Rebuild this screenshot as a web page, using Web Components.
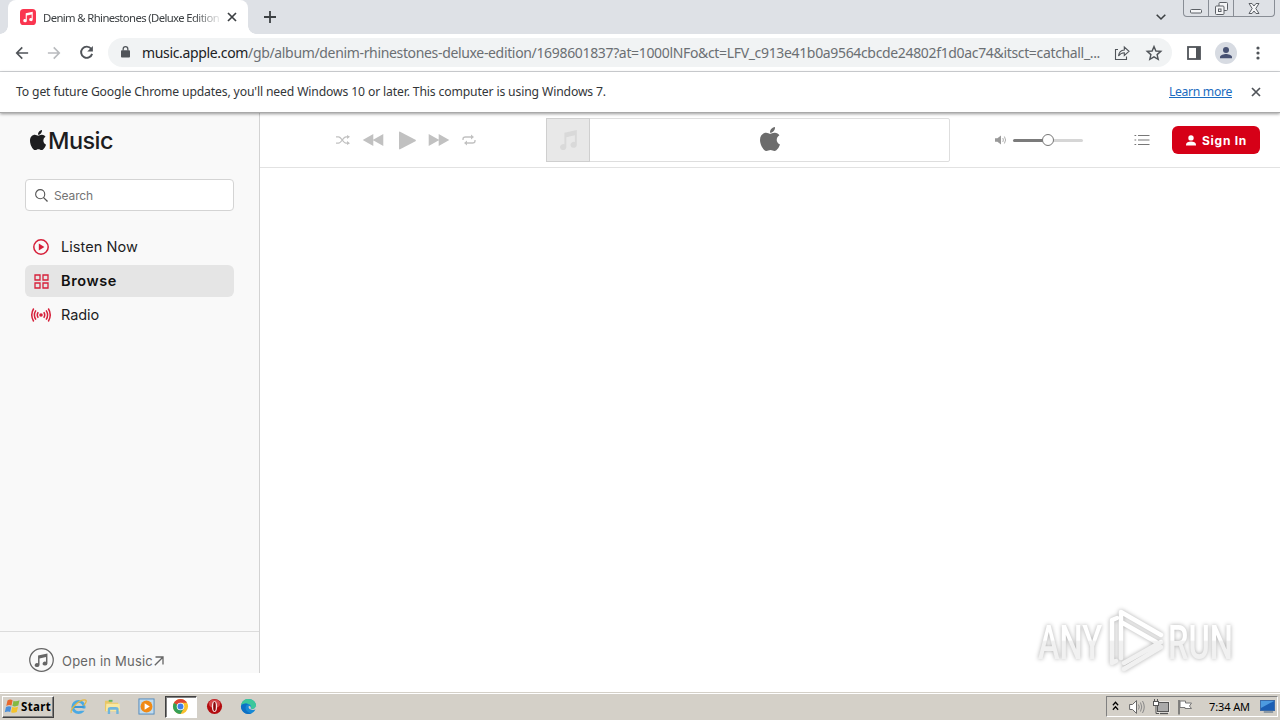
<!DOCTYPE html>
<html lang="en">
<head>
<meta charset="utf-8">
<title>Apple Music</title>
<style>
  body {
    margin: 0;
    width: 1280px;
    height: 720px;
    overflow: hidden;
    background: #fff;
    font-family: "Noto Sans", "Open Sans", sans-serif;
    display: flex;
    flex-direction: column;
  }
</style>
</head>
<body>
<tab-strip></tab-strip>
<browser-toolbar></browser-toolbar>
<info-bar></info-bar>
<music-page></music-page>
<task-bar></task-bar>
<any-watermark></any-watermark>

<script>
const APPLE = "M318.7 268.7c-.2-36.7 16.4-64.4 50-84.8-18.8-26.9-47.2-41.7-84.7-44.6-35.5-2.8-74.3 20.7-88.5 20.7-15 0-49.4-19.7-76.4-19.7C63.3 141.2 4 184.8 4 273.5q0 39.3 14.4 81.2c12.8 36.7 59 126.7 107.2 125.2 25.2-.6 43-17.9 75.8-17.9 31.8 0 48.3 17.9 76.4 17.9 48.6-.7 90.4-82.5 102.6-119.3-65.2-30.7-61.7-90-61.7-91.9zm-56.6-164.2c27.3-32.4 24.8-61.9 24-72.5-24.1 1.4-52 16.4-67.9 34.9-17.5 19.8-27.8 44.3-25.6 71.9 26.1 2 49.9-11.4 69.5-34.3z";
const NOTE = "M5.4 3.200 14.4 1.300V11.300A2.300 2 0 1 1 13 9.400V4.800L6.800 6.100V12.800A2.300 2 0 1 1 5.400 10.900Z";

// name: [viewBox, markup]
const ICONS = {
  apple: ["4 32 376 448", `<path fill="currentColor" d="${APPLE}"/>`],
  note: ["0 0 16 16", `<path fill="currentColor" d="${NOTE}"/>`],
  favicon: ["0 0 16 16", `<rect width="16" height="16" rx="3.6" fill="#fa3650"/><path fill="#fff" transform="translate(1.500 1.800) scale(.78)" d="${NOTE}"/>`],
  close: ["0 0 10 10", `<path d="M1 1 9 9M9 1 1 9" stroke="currentColor" stroke-width="1.7"/>`],
  plus: ["0 0 12 12", `<path d="M6 0V12M0 6H12" stroke="currentColor" stroke-width="1.8"/>`],
  chevron: ["0 0 10 6", `<path d="M.7.8 5 5 9.300.8" fill="none" stroke="currentColor" stroke-width="1.6"/>`],
  back: ["0 0 16 16", `<path d="M15 8H2M8.300 1.600 2 8 8.300 14.400" fill="none" stroke="currentColor" stroke-width="1.9"/>`],
  forward: ["0 0 16 16", `<path d="M1 8H14M7.700 1.600 14 8 7.700 14.400" fill="none" stroke="currentColor" stroke-width="1.9"/>`],
  reload: ["0 0 16 16", `<path d="M13 4A6 6 0 1 0 14 9.500" fill="none" stroke="currentColor" stroke-width="2"/><path fill="currentColor" d="M14.800 1V7H8.800Z"/>`],
  lock: ["0 0 10 13", `<rect y="4.600" width="10" height="7.900" rx="1" fill="currentColor"/><path d="M2.400 5V3.300A2.600 2.600 0 0 1 7.600 3.300V5" fill="none" stroke="currentColor" stroke-width="1.400"/>`],
  share: ["0 0 16 16", `<path d="M4 4.500H1.500V14.500H12.500V11.500M4.500 11C5 7 7 5.300 10.300 5V2L15 6.300 10.300 10.500V7.700C8 7.700 6 8.700 4.500 11Z" fill="none" stroke="currentColor" stroke-width="1.100"/>`],
  star: ["0 0 16 16", `<path d="M8 1.600 9.900 6 14.800 6.400 11.100 9.600 12.200 14.300 8 11.800 3.800 14.300 4.900 9.600 1.200 6.400 6.100 6Z" fill="none" stroke="currentColor" stroke-width="1.400"/>`],
  panel: ["0 0 14 14", `<rect x="1" y="1" width="12" height="12" fill="none" stroke="currentColor" stroke-width="1.800"/><path fill="currentColor" d="M9 1H13V13H9Z"/>`],
  avatar: ["0 0 22 22", `<circle cx="11" cy="11" r="11" fill="#d7dbe2"/><circle cx="11" cy="8" r="3" fill="#475172"/><path d="M5 16.200V15C5 12.900 9 12 11 12S17 12.900 17 15V16.200Z" fill="#475172"/>`],
  dots: ["0 0 4 14", `<g fill="currentColor"><circle cx="2" cy="2" r="1.600"/><circle cx="2" cy="7" r="1.600"/><circle cx="2" cy="12" r="1.600"/></g>`],
  search: ["0 0 14 14", `<circle cx="5.600" cy="5.600" r="4.900" fill="none" stroke="currentColor" stroke-width="1.200"/><path d="M9 9 13.500 13.500" stroke="currentColor" stroke-width="1.400"/>`],
  listen: ["0 0 16 16", `<circle cx="8" cy="8" r="7.200" fill="none" stroke="currentColor" stroke-width="1.500"/><path fill="currentColor" d="M5.800 4.600V11.400L11.400 8Z"/>`],
  browse: ["0 0 15 15", `<path d="M1 1H6V6H1ZM9 1H14V6H9ZM1 9H6V14H1ZM9 9H14V14H9Z" fill="none" stroke="currentColor" stroke-width="1.300"/>`],
  radio: ["0 0 20 14", `<circle cx="10" cy="7" r="1.800" fill="currentColor"/><path d="M7.200 4.200Q5.300 7 7.200 9.800M12.800 4.200Q14.700 7 12.800 9.800M4.900 2.400Q1.900 7 4.900 11.600M15.100 2.400Q18.100 7 15.100 11.600M2.700.5Q-1.200 7 2.700 13.500M17.300.5Q21.200 7 17.300 13.500" fill="none" stroke="currentColor" stroke-width="1.500"/>`],
  shuffle: ["0 0 14 10", `<path d="M0 1.800H2.500C5.500 1.800 7 8.200 10 8.200H12.500M0 8.200H2.500C5.500 8.200 7 1.800 10 1.800H12.500" fill="none" stroke="currentColor" stroke-width="1.300"/><path d="M11 0 14 1.800 11 3.900ZM11 6.100 14 8.200 11 10Z" fill="currentColor"/>`],
  prev: ["0 0 22 12", `<path d="M11.300 0V12L.7 6ZM21.300 0V12L10.700 6Z" fill="currentColor"/>`],
  play: ["0 0 16 20", `<path d="M0 1.500Q0 .3 1 .8L15.500 9.300Q16.500 10 15.500 10.700L1 19.200Q0 19.700 0 18.500Z" fill="currentColor"/>`],
  next: ["0 0 22 12", `<path d="M.7 0V12L11.300 6ZM10.700 0V12L21.300 6Z" fill="currentColor"/>`],
  repeat: ["0 0 14 12", `<path d="M1 6V5Q1 3 3.500 3H10M13 6V7Q13 9 10.500 9H4" fill="none" stroke="currentColor" stroke-width="1.300"/><path d="M9 .6 12 3 9 5.400ZM5 6.600 2 9 5 11.400Z" fill="currentColor"/>`],
  volume: ["0 0 12 10", `<path d="M0 3.200H2.400L6 .5V9.500L2.400 6.800H0Z" fill="currentColor"/><path d="M7.800 3Q9 5 7.800 7M9.400 1.500Q11.800 5 9.400 8.500" fill="none" stroke="currentColor" stroke-width=".8"/>`],
  list: ["0 0 16 12", `<path d="M4 1.500H15.500M4 6H15.500M4 10.500H15.500M.5 1.500H2.200M.5 6H2.200M.5 10.500H2.200" stroke="currentColor" stroke-width="1.200"/>`],
  person: ["0 0 10 11", `<circle cx="5" cy="2.900" r="2.700" fill="currentColor"/><path d="M0 10.600V9.400C0 7.500 2.500 6.500 5 6.500S10 7.500 10 9.400V10.600Z" fill="currentColor"/>`],
  openmusic: ["0 0 24 24", `<circle cx="12" cy="12" r="11.300" fill="none" stroke="currentColor" stroke-width="1.200"/><path fill="currentColor" transform="translate(3.300 4.300)" d="${NOTE}"/>`],
  arrow: ["0 0 10 10", `<path d="M.8 9.200 8.800 1.200M1.500 1H9V8.500" fill="none" stroke="currentColor" stroke-width="1.300"/>`],
  windows: ["0 0 17 17", `<path d="M3.500 2.500Q6 .8 8.600 2.300L7.500 7.600Q5 6.300 2.300 8Z" fill="#e8682c"/><path d="M9.500 2.700Q12 4 15.500 2.200L14.300 7.600Q11 9 8.400 7.900Z" fill="#83b943"/><path d="M2 9Q5 7.500 7.300 8.700L6.200 14Q4 12.800 .8 14.300Z" fill="#4a8fda"/><path d="M8.200 9Q11 10 14 8.700L12.800 14Q10 15.500 7.100 14.300Z" fill="#f4c32c"/>`],
  ie: ["0 0 18 18", `<circle cx="9" cy="9.500" r="6" fill="none" stroke="#4aa9e3" stroke-width="3"/><path d="M4 9.500H14.500" stroke="#3c98d7" stroke-width="2.200"/><path d="M12 11.200H17V13.500H11Z" fill="#d4d0c8"/><path d="M1.300 16C-.5 12 10 1 16.500 2.200 18.500 3 15.500 7 14.500 8" fill="none" stroke="#e5b740" stroke-width="1.300"/>`],
  folder: ["0 0 18 18", `<path d="M1 3H7L8.500 5H15V14H1Z" fill="#e8c765"/><path d="M2.500 6H16.500L17 14H2Z" fill="#f8e7a0"/><path d="M5 2H9V4H5Z" fill="#65b85f"/><path d="M4 17V12Q4 9.500 7 9.500H12.500Q15.500 9.500 15.500 12V17H13V12.500H6.500V17Z" fill="#6fb5dc"/>`],
  media: ["0 0 18 18", `<rect x="1" y="1" width="16" height="16" fill="#c0dcef" stroke="#528abb"/><circle cx="9" cy="9" r="6.300" fill="#f08a16"/><path fill="#fff" d="M7 5.500V12.500L12.500 9Z"/>`],
  chrome: ["0 0 18 18", `<circle cx="9" cy="9" r="8" fill="#fbc02d"/><path d="M9 9 2.100 5A8 8 0 0 1 15.900 5H9Z" fill="#df4435"/><path d="M2.100 5A8 8 0 0 0 9 17L12.500 11 9 9Z" fill="#36a057"/><path d="M2.100 5H9V9Z" fill="#df4435"/><circle cx="9" cy="9" r="4" fill="#fff"/><circle cx="9" cy="9" r="3.100" fill="#3f7fe8"/>`],
  opera: ["0 0 18 18", `<ellipse cx="9" cy="9" rx="8" ry="8" fill="#b30d10"/><ellipse cx="9" cy="6" rx="6" ry="4.500" fill="#d6474a"/><ellipse cx="9" cy="9" rx="2.800" ry="5.900" fill="#f7e9e9"/><ellipse cx="9" cy="9" rx="1.400" ry="4.900" fill="#8d090c"/>`],
  edge: ["0 0 18 18", `<circle cx="9" cy="9" r="8" fill="#1689d5"/><path d="M1.100 8C2 3 5 1 9 1 14 1 17 4.500 17 8 17 11 14.500 12 11.300 11.500 12.500 10 12 6.500 8 6 5 5.600 2 6.500 1.100 8Z" fill="#3cc79b"/><path d="M1 9C2 6 6 5 9 6.500 6.500 7 5.500 9 6 11.500 6.600 14 9 16 12 16.400A8 8 0 0 1 1 9Z" fill="#0d6fc4"/><path d="M9.500 8.500C8.500 9.500 9 13.500 16 12.500L17.500 11.500 17 8.500C16 11.500 13 12 11.300 11.500 12 10 11 8 9.500 8.500Z" fill="#d4d0c8"/>`],
  trayup: ["0 0 8 10", `<path d="M1 4.300 4 1.300 7 4.300M1 8.800 4 5.800 7 8.800" fill="none" stroke="currentColor" stroke-width="1.500"/>`],
  speaker: ["0 0 16 16", `<path d="M.6 5.500H3.500L7.500 1.600V14.400L3.500 10.500H.6Z" fill="#fff" stroke="#666"/><path d="M9.500 5.500Q11 8 9.500 10.500M11.500 3.500Q14 8 11.500 12.500M13.500 2Q17 8 13.500 14" fill="none" stroke="#888"/>`],
  network: ["0 0 16 16", `<rect x="4.500" y="3.500" width="11" height="9" fill="#aaa" stroke="#fff" stroke-width="2"/><rect x="4.500" y="3.500" width="11" height="9" fill="#aaa" stroke="#555"/><path d="M7 14.500H15" stroke="#555" stroke-width="1.300"/><path d="M1.500 0V3M4.500 0V3M3 6V14.500H6" fill="none" stroke="#555"/><rect x=".5" y="2.500" width="5" height="4" fill="#fff" stroke="#555"/>`],
  flag: ["0 0 16 16", `<path d="M2 1V15.500" stroke="#666" stroke-width="1.500"/><path d="M3 2H8.500V4H14.500L12.500 7 14.500 9.500H8V8.500H3Z" fill="#fff" stroke="#777"/>`],
  desktop: ["0 0 16 13", `<rect x=".5" y=".5" width="15" height="10" fill="#1c5fb4" stroke="#3a6aa8"/><path d="M1 1H15L1 8Z" fill="#4d9be0"/><path d="M4 12H14" stroke="#789" stroke-width="1.500"/>`]
};

class UiIcon extends HTMLElement {
  connectedCallback() {
    if (!this.shadowRoot) this.attachShadow({ mode: "open" });
    const [box, markup] = ICONS[this.getAttribute("name")];
    const w = this.getAttribute("w") || 16;
    const h = this.getAttribute("h") || w;
    this.shadowRoot.innerHTML = `
      <style>
        :host { display: block; flex: none; width: ${w}px; height: ${h}px; }
        svg { display: block; width: 100%; height: 100%; overflow: visible; }
      </style>
      <svg viewBox="${box}" preserveAspectRatio="none">${markup}</svg>
    `;
  }
}

// Single line label that is tracked to an exact width
class FitText extends HTMLElement {
  connectedCallback() {
    if (!this.shadowRoot) this.attachShadow({ mode: "open" });
    this.shadowRoot.innerHTML = `
      <style>
        :host { display: block; flex: none; white-space: nowrap; width: ${this.getAttribute("w")}px; }
        span { display: inline-block; }
        :host(.link) span { text-decoration: underline; }
      </style>
      <span><slot></slot></span>
    `;
    const span = this.shadowRoot.querySelector("span");
    const width = span.getBoundingClientRect().width;
    const diff = Number(this.getAttribute("w")) - width;
    span.style.letterSpacing = diff / this.textContent.length + "px";
  }
}

class TabStrip extends HTMLElement {
  connectedCallback() {
    this.attachShadow({ mode: "open" });
    this.shadowRoot.innerHTML = `
      <style>
        :host { display: flex; height: 34px; background: #dee1e6; color: #3c4043; padding: 0 5px 0 8px; box-sizing: border-box; }
        .tab {
          position: relative; display: flex; align-items: center; box-sizing: border-box;
          width: 240px; padding: 0 11px 0 12px; background: #fff; border-radius: 8px 8px 0 0;
        }
        .tab::before, .tab::after { content: ""; position: absolute; bottom: 0; width: 8px; height: 8px; }
        .tab::before { left: -8px; background: radial-gradient(circle at 0 0, transparent 7.5px, #fff 8px); }
        .tab::after { right: -8px; background: radial-gradient(circle at 100% 0, transparent 7.5px, #fff 8px); }
        .title {
          width: 177px; margin: 1px 7px 0 7px; font-size: 11.3px; line-height: 18px;
          -webkit-mask-image: linear-gradient(to right, #000 150px, transparent 180px);
        }
        .add { align-self: center; margin-left: 16px; }
        .down { margin: 14px 17px 0 auto; }
        .window { display: flex; width: 90px; height: 16px; border: 1px solid #888d95; border-top: 0; border-radius: 0 0 4px 4px; }
        .window div { width: 24px; border-right: 1px solid #888d95; display: flex; justify-content: center; align-items: center; }
        .window div:last-child { flex: 1; border: 0; }
        svg { display: block; fill: #f4f5f7; stroke: #5c6066; }
      </style>
      <div class="tab">
        <ui-icon name="favicon"></ui-icon>
        <div class="title"><fit-text w="176">Denim &amp; Rhinestones (Deluxe Edition</fit-text></div>
        <ui-icon name="close" w="10"></ui-icon>
      </div>
      <ui-icon class="add" name="plus" w="12"></ui-icon>
      <ui-icon class="down" name="chevron" w="10" h="6"></ui-icon>
      <div class="window">
        <div><svg width="12" height="12"><rect x=".5" y="7.500" width="11" height="3.500" rx="1"/></svg></div>
        <div><svg width="13" height="13"><rect x="4" y=".5" width="8.500" height="8" rx="1"/><rect x=".5" y="4" width="8.500" height="8.500" rx="1"/><rect x="3.500" y="7" width="2.500" height="2.500"/></svg></div>
        <div><svg width="12" height="11"><path d="M1 .5H4L6 3 8 .5H11L7.800 5.500 11 10.500H8L6 8 4 10.500H1L4.200 5.500Z"/></svg></div>
      </div>
    `;
  }
}

class BrowserToolbar extends HTMLElement {
  connectedCallback() {
    this.attachShadow({ mode: "open" });
    this.shadowRoot.innerHTML = `
      <style>
        :host { display: flex; align-items: center; height: 38px; box-sizing: border-box; padding: 0 6px; border-bottom: 1px solid #d5d7da; color: #505459; }
        .cell { display: flex; justify-content: center; align-items: center; width: 32px; flex: none; }
        .off { color: #b9bbbe; }
        .omnibox {
          display: flex; align-items: center; box-sizing: border-box; width: 1064px; height: 29px;
          margin: 0 6px; padding: 0 2px 0 13px; border-radius: 15px; background: #f1f3f4;
        }
        .omnibox > ui-icon { margin-top: -1px; }
        fit-text { font-size: 14px; line-height: 22px; margin: 1px 6px 0 12px; color: #6b6f73; }
        b { font-weight: 400; color: #202124; }
      </style>
      <div class="cell"><ui-icon name="back" w="14"></ui-icon></div>
      <div class="cell off"><ui-icon name="forward" w="14"></ui-icon></div>
      <div class="cell"><ui-icon name="reload" w="15"></ui-icon></div>
      <div class="omnibox">
        <ui-icon name="lock" w="9" h="12"></ui-icon>
        <fit-text w="958"><b>music.apple.com</b>/gb/album/denim-rhinestones-deluxe-edition/1698601837?at=1000lNFo&amp;ct=LFV_c913e41b0a9564cbcde24802f1d0ac74&amp;itsct=catchall_...</fit-text>
        <div class="cell"><ui-icon name="share"></ui-icon></div>
        <div class="cell"><ui-icon name="star"></ui-icon></div>
      </div>
      <div class="cell"><ui-icon name="panel" w="14"></ui-icon></div>
      <div class="cell"><ui-icon name="avatar" w="22"></ui-icon></div>
      <div class="cell"><ui-icon name="dots" w="4" h="14"></ui-icon></div>
    `;
  }
}

class InfoBar extends HTMLElement {
  connectedCallback() {
    this.attachShadow({ mode: "open" });
    this.shadowRoot.innerHTML = `
      <style>
        :host {
          display: flex; align-items: center; height: 41px; box-sizing: border-box; padding: 0 19px 0 16px;
          border-bottom: 1px solid #a9a9a9; box-shadow: 0 1px 3px rgba(0, 0, 0, .4);
          position: relative; z-index: 1; background: #fff; color: #333639; font-size: 12.2px; line-height: 18px;
        }
        .link { margin-left: auto; color: #1a6bc0; }
        ui-icon { margin-left: 19px; color: #505459; }
      </style>
      <fit-text w="590">To get future Google Chrome updates, you'll need Windows 10 or later. This computer is using Windows 7.</fit-text>
      <fit-text class="link" w="63">Learn more</fit-text>
      <ui-icon name="close" w="10"></ui-icon>
    `;
  }
}

class NavItem extends HTMLElement {
  connectedCallback() {
    this.attachShadow({ mode: "open" });
    this.shadowRoot.innerHTML = `
      <style>
        :host { display: flex; align-items: center; height: 32px; border-radius: 6px; color: #1d1d1f; font-size: 14.5px; line-height: 18px; }
        :host([active]) { background: #e5e5e5; font-weight: 600; color: #111; }
        .icon { width: 32px; margin-right: 4px; display: flex; justify-content: center; color: #d6203a; }
        ::slotted(fit-text) { margin-top: -1px; }
      </style>
      <div class="icon"><slot name="icon"></slot></div>
      <slot></slot>
    `;
  }
}

class MusicSidebar extends HTMLElement {
  connectedCallback() {
    this.attachShadow({ mode: "open" });
    this.shadowRoot.innerHTML = `
      <style>
        :host { display: flex; flex-direction: column; width: 260px; flex: none; box-sizing: border-box; background: #f9f9f9; border-right: 1px solid #d3d3d3; }
        .logo { display: flex; align-items: center; height: 30px; margin: 13px 0 0 30px; gap: 2px; color: #1d1d1f; font-size: 23.5px; font-weight: 500; line-height: 30px; }
        .logo ui-icon { margin-top: -2px; }
        .search {
          display: flex; align-items: center; box-sizing: border-box; height: 32px; margin: 23px 25px 0; padding-left: 9px; gap: 6px;
          border: 1px solid #d4d4d4; border-radius: 4px; background: #fff; color: #737373; font-size: 12px;
        }
        .search ui-icon { color: #555; }
        nav { display: flex; flex-direction: column; gap: 2px; margin: 20px 25px 0; }
        footer { display: flex; align-items: center; height: 42px; margin-top: auto; padding: 15px 0 0 29px; box-sizing: border-box; border-top: 1px solid #dcdcdc; color: #666; font-size: 13px; }
        footer fit-text { margin: 2px 1px 0 8px; }
        footer ui-icon:last-child { margin-top: 2px; }
      </style>
      <div class="logo"><ui-icon name="apple" w="16" h="20"></ui-icon><fit-text w="65">Music</fit-text></div>
      <div class="search"><ui-icon name="search" w="13"></ui-icon><fit-text w="39">Search</fit-text></div>
      <nav>
        <nav-item><ui-icon slot="icon" name="listen"></ui-icon><fit-text w="77">Listen Now</fit-text></nav-item>
        <nav-item active><ui-icon slot="icon" name="browse" w="15"></ui-icon><fit-text w="56">Browse</fit-text></nav-item>
        <nav-item><ui-icon slot="icon" name="radio" w="20" h="14"></ui-icon><fit-text w="38">Radio</fit-text></nav-item>
      </nav>
      <footer>
        <ui-icon name="openmusic" w="25" h="24"></ui-icon>
        <fit-text w="91">Open in Music</fit-text>
        <ui-icon name="arrow" w="10"></ui-icon>
      </footer>
    `;
  }
}

class MusicPlayer extends HTMLElement {
  connectedCallback() {
    this.attachShadow({ mode: "open" });
    this.shadowRoot.innerHTML = `
      <style>
        :host { display: flex; align-items: center; height: 55px; box-sizing: border-box; padding: 0 20px 0 76px; border-bottom: 1px solid #e2e2e2; color: #c1c1c1; }
        .lcd { display: flex; box-sizing: border-box; width: 404px; height: 44px; margin-left: 70px; border: 1px solid #dedede; border-radius: 2px; }
        .art { display: flex; align-items: center; justify-content: center; box-sizing: border-box; width: 44px; margin: -1px 0 -1px -1px; background: #e8e8e8; border: 1px solid #cfcfcf; color: #d9d9d9; }
        .screen { flex: 1; display: flex; align-items: center; justify-content: center; color: #6c6c6c; }
        .slider { position: relative; width: 70px; height: 3px; margin-left: 6px; border-radius: 2px; background: linear-gradient(to right, #7b7b7b 50%, #d6d6d6 50%); }
        .slider::after { content: ""; position: absolute; box-sizing: border-box; left: 29px; top: -4.5px; width: 12px; height: 12px; border: 1px solid #777; border-radius: 50%; background: #fff; }
        button {
          display: flex; align-items: center; width: 88px; height: 28px; margin: 0 0 0 22px; padding: 0 0 0 14px; gap: 6px;
          border: 0; border-radius: 6px; background: #d60017; color: #fff; font: 700 12px Inter, sans-serif;
        }
      </style>
      <ui-icon name="shuffle" w="14" h="10"></ui-icon>
      <ui-icon name="prev" w="22" h="12" style="margin-left:12px"></ui-icon>
      <ui-icon name="play" w="17" h="19" style="margin-left:15px"></ui-icon>
      <ui-icon name="next" w="22" h="12" style="margin-left:12px"></ui-icon>
      <ui-icon name="repeat" w="14" h="12" style="margin-left:12px"></ui-icon>
      <div class="lcd">
        <div class="art"><ui-icon name="note" w="22" h="24"></ui-icon></div>
        <div class="screen"><ui-icon name="apple" w="20" h="24" style="margin-top:-2px"></ui-icon></div>
      </div>
      <ui-icon name="volume" w="12" h="10" style="margin-left:45px;color:#999"></ui-icon>
      <div class="slider"></div>
      <ui-icon name="list" w="16" h="12" style="margin-left:51px;color:#777"></ui-icon>
      <button><ui-icon name="person" w="10" h="11"></ui-icon><fit-text w="45">Sign In</fit-text></button>
    `;
  }
}

class MusicPage extends HTMLElement {
  connectedCallback() {
    this.attachShadow({ mode: "open" });
    this.shadowRoot.innerHTML = `
      <style>
        :host { display: flex; height: 560px; font-family: Inter, "Liberation Sans", sans-serif; }
        main { flex: 1; min-width: 0; }
      </style>
      <music-sidebar></music-sidebar>
      <main><music-player></music-player></main>
    `;
  }
}

class TaskBar extends HTMLElement {
  connectedCallback() {
    this.attachShadow({ mode: "open" });
    this.shadowRoot.innerHTML = `
      <style>
        :host {
          display: flex; align-items: center; box-sizing: border-box; height: 28px; margin-top: auto; padding: 0 2px;
          background: #d4d0c8; border-top: 1px solid #d4d0c8; box-shadow: inset 0 1px #fff; color: #000; font-size: 11px;
        }
        .start {
          display: flex; align-items: center; box-sizing: border-box; width: 52px; height: 22px; padding-left: 1px; gap: 0;
          border: 1px solid; border-color: #fff #404040 #404040 #fff; box-shadow: inset -1px -1px #808080; font-weight: 700; font-size: 11.5px;
        }
        .apps { display: flex; margin-left: 8.500px; }
        .app { display: flex; justify-content: center; align-items: center; box-sizing: border-box; width: 32px; height: 22px; margin-right: 2px; }
        .app.on { background: #fff; border: 1px solid; border-color: #404040 #fff #fff #404040; box-shadow: inset 1px 1px #808080; }
        .tray {
          display: flex; align-items: center; box-sizing: border-box; width: 172px; height: 21px; margin-left: auto; padding-left: 5px;
          border: 1px solid; border-color: #808080 #fff #fff #808080;
        }
        .tray fit-text { margin: 0 10px 0 16px; }
      </style>
      <div class="start"><ui-icon name="windows" w="17"></ui-icon><fit-text w="30">Start</fit-text></div>
      <div class="apps">
        <div class="app"><ui-icon name="ie" w="17"></ui-icon></div>
        <div class="app"><ui-icon name="folder" w="17"></ui-icon></div>
        <div class="app"><ui-icon name="media" w="17"></ui-icon></div>
        <div class="app on"><ui-icon name="chrome" w="17"></ui-icon></div>
        <div class="app"><ui-icon name="opera" w="17"></ui-icon></div>
        <div class="app"><ui-icon name="edge" w="17"></ui-icon></div>
      </div>
      <div class="tray">
        <ui-icon name="trayup" w="7" h="10" style="margin-top:-2px"></ui-icon>
        <ui-icon name="speaker" w="16" style="margin-left:10px"></ui-icon>
        <ui-icon name="network" w="16" style="margin-left:8px"></ui-icon>
        <ui-icon name="flag" w="16" style="margin-left:8px"></ui-icon>
        <fit-text w="41">7:34 AM</fit-text>
        <ui-icon name="desktop" w="15" h="13"></ui-icon>
      </div>
    `;
  }
}

class AnyWatermark extends HTMLElement {
  connectedCallback() {
    this.attachShadow({ mode: "open" });
    this.shadowRoot.innerHTML = `
      <style>
        :host { position: absolute; left: 1030px; top: 600px; display: block; pointer-events: none; }
        svg { display: block; filter: drop-shadow(0 0 2px rgba(0, 0, 0, .32)); }
        text { font: 500 49px Roboto, sans-serif; fill: url(#fade); }
      </style>
      <svg width="240" height="80" viewBox="0 0 240 80">
        <defs>
          <linearGradient id="fade" gradientUnits="userSpaceOnUse" x1="0" y1="0" x2="0" y2="80">
            <stop offset=".5" stop-color="#fff"/><stop offset=".52" stop-color="#f1f1f1"/>
          </linearGradient>
        </defs>
        <text x="8" y="59" textLength="64" lengthAdjust="spacingAndGlyphs">ANY</text>
        <g fill="none" stroke="url(#fade)" stroke-width="4.500" stroke-linejoin="round" stroke-linecap="round">
          <path d="M87 18 82 20V63L86 61"/>
          <path d="M91 58V12L131 35M91 22 126 42M131 42 94 63M94 69 131 47"/>
        </g>
        <text x="138" y="59" textLength="65" lengthAdjust="spacingAndGlyphs">RUN</text>
      </svg>
    `;
  }
}

customElements.define("ui-icon", UiIcon);
customElements.define("fit-text", FitText);
customElements.define("tab-strip", TabStrip);
customElements.define("browser-toolbar", BrowserToolbar);
customElements.define("info-bar", InfoBar);
customElements.define("nav-item", NavItem);
customElements.define("music-sidebar", MusicSidebar);
customElements.define("music-player", MusicPlayer);
customElements.define("music-page", MusicPage);
customElements.define("task-bar", TaskBar);
customElements.define("any-watermark", AnyWatermark);
</script>
</body>
</html>
